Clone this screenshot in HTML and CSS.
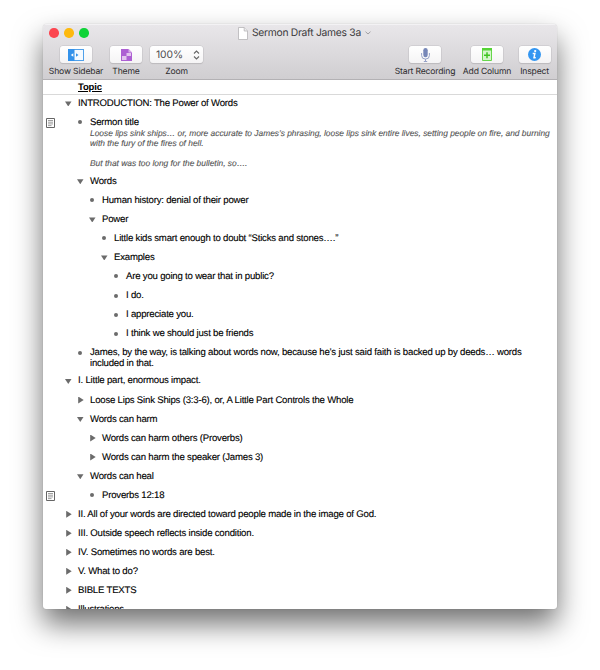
FILE: index.html
```html
<!DOCTYPE html>
<html lang="en">
<head>
<meta charset="utf-8">
<title>Sermon Draft James 3a</title>
<link rel="stylesheet" href="styles.css">
</head>
<body>
<div class="window">
  <header class="chrome">
    <div class="titlebar">
      <div class="lights"><i class="light red"></i><i class="light amber"></i><i class="light green"></i></div>
      <div class="title">
        <svg class="doc" viewBox="0 0 10 13"><path d="M.5.5h5.7L9.5 4v8.500H.5z" fill="#fff" stroke="#b5b4b6" stroke-width=".8"/><path d="M6.200.5V4h3.300" fill="#eee" stroke="#b5b4b6" stroke-width=".8"/></svg>
        <span class="title-text">Sermon Draft James 3a</span>
        <svg class="chev" viewBox="0 0 6 4"><path d="M.5.7 3 3 5.500.7" fill="none" stroke="#a19fa2"/></svg>
      </div>
    </div>
    <div class="toolbar">
      <div class="tool t-sidebar"><div class="btn">
        <svg width="16" height="12" viewBox="0 0 16 12"><rect x=".5" y=".5" width="15" height="11" fill="#f5faff" stroke="#4fa0ea"/><path d="M0 0h6.500v12H0z" fill="#3492ea"/><path d="M5.300 4.200v3.600L2.800 6z" fill="#fff"/><path d="M8 4.200v3.600L10.500 6z" fill="#3492ea"/></svg>
      </div><span class="label">Show Sidebar</span></div>
      <div class="tool t-theme"><div class="btn">
        <svg width="11" height="12" viewBox="0 0 11 12"><path d="M0 0h7.500L11 3.500V12H0z" fill="#ad5fd3"/><path d="M5.500 4H10v3H5.500zM1 7h4.500v4H1z" fill="#e3c4ef"/><path d="M7.500 0v3.500H11z" fill="#d9afe9"/></svg>
      </div><span class="label">Theme</span></div>
      <div class="tool t-zoom"><div class="btn zoom"><span>100%</span>
        <svg width="7" height="10" viewBox="0 0 7 10"><path d="M1 3.500 3.500 1 6 3.500M1 6.500 3.500 9 6 6.500" fill="none" stroke="#666" stroke-width="1.100"/></svg>
      </div><span class="label">Zoom</span></div>
      <div class="spacer"></div>
      <div class="tool t-record"><div class="btn">
        <svg width="9" height="14" viewBox="0 0 9 14"><rect x="2.300" y="0" width="4.400" height="9.300" rx="2.200" fill="#7787b8"/><path d="M.6 5v2.500a3.900 3.600 0 0 0 7.800 0V5M4.500 11v2.500" fill="none" stroke="#96a2c8" stroke-width="1"/><path d="M2.800 13.500h3.400" stroke="#96a2c8" stroke-width="1"/></svg>
      </div><span class="label">Start Recording</span></div>
      <div class="tool t-column"><div class="btn">
        <svg width="10" height="13" viewBox="0 0 10 13"><path d="M.5 1h9v11.500h-9z" fill="#d5f5cc" stroke="#66d64b"/><path d="M0 0h10v2.500H0z" fill="#55d335"/><path d="M5 4.300v5.900M2 7.250h6" stroke="#3fc322" stroke-width="1.500"/></svg>
      </div><span class="label">Add Column</span></div>
      <div class="tool t-inspect"><div class="btn">
        <svg width="13" height="13" viewBox="0 0 13 13"><circle cx="6.500" cy="6.500" r="6.500" fill="#3496f1"/><circle cx="7.200" cy="3.100" r="1.150" fill="#fff"/><path d="M4.700 5.500h2.200L5.900 9.800q.6.300 1.800-.5" fill="none" stroke="#fff" stroke-width="1.400"/></svg>
      </div><span class="label">Inspect</span></div>
    </div>
  </header>
  <div class="colhead"><span>Topic</span></div>
  <main class="outline">
    <div class="row l0"><i class="mark open"></i><p>INTRODUCTION: The Power of Words</p></div>
    <div class="row l1 noted"><svg class="note-icon" viewBox="0 0 9 10"><path d="M.5.5h8v9h-8z" fill="#fff" stroke="#666"/><path d="M2 2.500h5M2 4.200h5M2 5.900h5M2 7.600h3.500" stroke="#888" stroke-width=".8"/></svg><i class="mark dot"></i><div><p>Sermon title</p><div class="note">Loose lips sink ships… or, more accurate to James’s phrasing, loose lips sink entire lives, setting people on fire, and burning<br>with the fury of the fires of hell.<br><br>But that was too long for the bulletin, so….</div></div></div>
    <div class="row l1"><i class="mark open"></i><p>Words</p></div>
    <div class="row l2"><i class="mark dot"></i><p>Human history: denial of their power</p></div>
    <div class="row l2"><i class="mark open"></i><p>Power</p></div>
    <div class="row l3"><i class="mark dot"></i><p>Little kids smart enough to doubt “Sticks and stones….”</p></div>
    <div class="row l3"><i class="mark open"></i><p>Examples</p></div>
    <div class="row l4"><i class="mark dot"></i><p>Are you going to wear that in public?</p></div>
    <div class="row l4"><i class="mark dot"></i><p>I do.</p></div>
    <div class="row l4"><i class="mark dot"></i><p>I appreciate you.</p></div>
    <div class="row l4"><i class="mark dot"></i><p>I think we should just be friends</p></div>
    <div class="row l1 double"><i class="mark dot"></i><p>James, by the way, is talking about words now, because he’s just said faith is backed up by deeds… words<br>included in that.</p></div>
    <div class="row l0"><i class="mark open"></i><p>I. Little part, enormous impact.</p></div>
    <div class="row l1"><i class="mark closed"></i><p>Loose Lips Sink Ships (3:3-6), or, A Little Part Controls the Whole</p></div>
    <div class="row l1"><i class="mark open"></i><p>Words can harm</p></div>
    <div class="row l2"><i class="mark closed"></i><p>Words can harm others (Proverbs)</p></div>
    <div class="row l2"><i class="mark closed"></i><p>Words can harm the speaker (James 3)</p></div>
    <div class="row l1"><i class="mark open"></i><p>Words can heal</p></div>
    <div class="row l2"><svg class="note-icon" viewBox="0 0 9 10"><path d="M.5.5h8v9h-8z" fill="#fff" stroke="#666"/><path d="M2 2.500h5M2 4.200h5M2 5.900h5M2 7.600h3.500" stroke="#888" stroke-width=".8"/></svg><i class="mark dot"></i><p>Proverbs 12:18</p></div>
    <div class="row l0"><i class="mark closed"></i><p>II. All of your words are directed toward people made in the image of God.</p></div>
    <div class="row l0"><i class="mark closed"></i><p>III. Outside speech reflects inside condition.</p></div>
    <div class="row l0"><i class="mark closed"></i><p>IV. Sometimes no words are best.</p></div>
    <div class="row l0"><i class="mark closed"></i><p>V. What to do?</p></div>
    <div class="row l0"><i class="mark closed"></i><p>BIBLE TEXTS</p></div>
    <div class="row l0"><i class="mark closed"></i><p>Illustrations</p></div>
  </main>
</div>
</body>
</html>
```
FILE: styles.css
```css
* { box-sizing: border-box; }
body {
  margin: 0;
  width: 600px;
  height: 670px;
  padding: 24px 0 0 43px;
  overflow: hidden;
  background: #fff;
  font-family: "Liberation Sans", Arial, sans-serif;
  text-rendering: geometricPrecision;
}
p { margin: 0; }
svg { display: block; flex: none; }
.window {
  width: 514px;
  height: 585px;
  display: flex;
  flex-direction: column;
  overflow: hidden;
  border-radius: 4px 4px 3px 3px;
  background: #fff;
  box-shadow: 0 0 1px rgba(0, 0, 0, .3), 0 15px 29px rgba(0, 0, 0, .56);
}
.chrome {
  flex: none;
  height: 56px;
  background: linear-gradient(#e9e7ea, #d0ced1);
  border-bottom: 1px solid #b3b1b4;
  box-shadow: inset 0 1px #f3f2f4;
  font-family: Inter, sans-serif;
}
.titlebar {
  display: grid;
  grid-template-columns: 195px 1fr;
  align-items: center;
  height: 18px;
}
.lights { display: flex; gap: 5.500px; padding-left: 6px; }
.light { width: 9.500px; height: 9.500px; border-radius: 50%; }
.red { background: #fc4650; }
.amber { background: #fdb90d; }
.green { background: #0fd337; }
.title { display: flex; align-items: center; font-size: 10.300px; letter-spacing: -.28px; line-height: 14px; color: #39383a; }
.doc { width: 10px; height: 13px; margin-right: 4px; }
.title-text { white-space: nowrap; }
.chev { width: 6px; height: 4px; margin-left: 4px; }
.toolbar { display: flex; padding: 4px 6px 0; }
.tool { display: flex; flex-direction: column; align-items: center; }
.t-sidebar { width: 54px; margin-right: 7px; }
.t-theme { width: 32px; margin-right: 8px; }
.t-zoom { width: 53px; }
.spacer { flex: 1; }
.t-record { width: 62px; margin-right: 7px; }
.t-column { width: 48px; margin-right: 7px; }
.t-inspect { width: 33px; }
.btn {
  width: 32px;
  height: 17px;
  display: flex;
  align-items: center;
  justify-content: center;
  border-radius: 3px;
  background: linear-gradient(#fff, #f5f4f5);
  box-shadow: 0 0 0 .5px #c4c2c5, 0 1px 1px #b5b3b6;
}
.zoom { width: 53px; justify-content: space-between; padding: 0 3px 0 6px; font-size: 10.300px; letter-spacing: -.1px; color: #4a494b; }
.label { margin-top: 3px; font-size: 8.600px; letter-spacing: -.17px; line-height: 12px; color: #2c2b2d; white-space: nowrap; }
.colhead {
  flex: none;
  height: 15px;
  padding-left: 35px;
  border-bottom: 1px solid #d9d9d9;
  font-size: 9.500px;
  font-weight: bold;
  letter-spacing: -.15px;
  line-height: 15px;
  text-decoration: underline;
}
.outline { flex: 1; min-height: 0; overflow: hidden; }
.row {
  position: relative;
  display: flex;
  height: 19.040px;
  padding-top: 2.900px;
  font-size: 9.600px;
  letter-spacing: -.2px;
  line-height: 11px;
  color: #000;
  white-space: nowrap;
  -webkit-text-stroke: .12px;
}
.noted { height: 58.900px; }
.double { height: 28.400px; }
.l0 { padding-left: 22px; }
.l1 { padding-left: 34px; }
.l2 { padding-left: 46px; }
.l3 { padding-left: 58px; }
.l4 { padding-left: 70px; }
.mark { flex: none; width: 13px; height: 11px; display: flex; align-items: center; }
.mark::before { content: ""; display: block; background: #6b6b6b; }
.dot::before { width: 4px; height: 4px; margin: 0 0 0 1.200px; border-radius: 50%; }
.open::before { width: 6.500px; height: 5px; margin-top: 1px; clip-path: polygon(0 0, 100% 0, 50% 100%); }
.closed::before { width: 5.500px; height: 7px; margin: 0 0 0 1.200px; clip-path: polygon(0 0, 100% 50%, 0 100%); }
.note { margin-top: 1.500px; font-size: 8.400px; letter-spacing: 0; line-height: 9.900px; font-style: italic; color: #555; }
.note-icon { position: absolute; left: 2.500px; top: 4px; width: 9px; height: 10px; }
```
